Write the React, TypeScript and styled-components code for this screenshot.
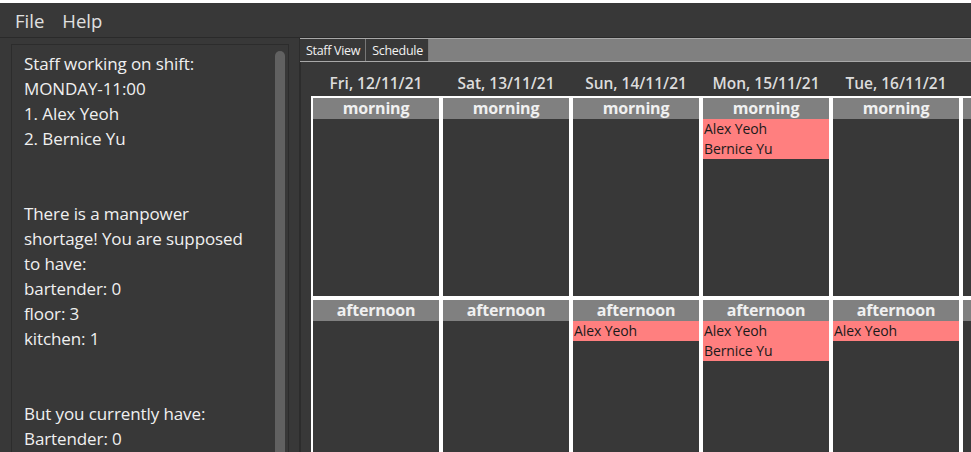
import React from "react";
import styled, { createGlobalStyle } from "styled-components";

const Global = createGlobalStyle`
  html, body { margin: 0; padding: 0; background: #383838; overflow: hidden; }
  body { font-family: "Open Sans", "Noto Sans", sans-serif; }
  * { box-sizing: border-box; }
`;

const Window = styled.div`
  width: 971px;
  height: 452px;
  display: flex;
  flex-direction: column;
  border-top: 3px solid #ffffff;
  background: #383838;
  overflow: hidden;
`;

const MenuBar = styled.div`
  height: 35px;
  flex: none;
  display: flex;
  align-items: center;
  gap: 18px;
  padding-left: 15px;
  background: #383838;
  border-bottom: 1px solid #2a2a2a;
`;

const MenuItem = styled.span`
  font-size: 18.5px;
  color: #e0e0e0;
`;

const Body = styled.div`
  flex: 1;
  display: flex;
  min-height: 0;
`;

const LeftPane = styled.div`
  width: 300px;
  flex: none;
  padding: 6px 0 0 11px;
  display: flex;
  border-right: 1px solid #2c2c2c;
`;

const InfoBox = styled.div`
  width: 278px;
  position: relative;
  border: 1px solid #2c2c2c;
  border-bottom: none;
  padding: 6px 0 0 12px;
  overflow: hidden;
`;

const InfoText = styled.div`
  font-size: 17px;
  line-height: 25px;
  color: #f0f0f0;
  width: 228px;
  white-space: pre-wrap;
  letter-spacing: -0.1px;
`;

const ScrollThumb = styled.div`
  position: absolute;
  top: 6px;
  right: 3px;
  width: 10px;
  height: 420px;
  border-radius: 5px;
  background: #616161;
`;

const RightPane = styled.div`
  flex: 1;
  display: flex;
  flex-direction: column;
  min-width: 0;
`;

const TabStrip = styled.div`
  height: 24px;
  flex: none;
  display: flex;
  background: #808080;
  border-top: 1px solid #a8a8a8;
  border-bottom: 1px solid #a8a8a8;
`;

const Tab = styled.div`
  height: 100%;
  display: flex;
  align-items: center;
  padding: 0 5px 0 6px;
  background: #383838;
  color: #f2f2f2;
  font-size: 12.5px;
  border-right: 1px solid #777;
  letter-spacing: -0.3px;
`;

const Content = styled.div`
  flex: 1;
  border-left: 1px solid #2c2c2c;
  padding: 0 0 0 10px;
  display: flex;
  flex-direction: column;
  min-height: 0;
  overflow: hidden;
`;

const DateRow = styled.div`
  height: 34px;
  flex: none;
  display: grid;
  grid-template-columns: repeat(6, 126px);
  column-gap: 4px;
  padding-left: 2px;
  align-items: end;
  padding-bottom: 2px;
`;

const DateLabel = styled.div`
  text-align: center;
  font-size: 15.5px;
  font-weight: 600;
  color: #dcdcdc;
  white-space: nowrap;
`;

const Grid = styled.div`
  display: grid;
  grid-template-columns: repeat(6, 126px);
  grid-template-rows: 198px 200px;
  gap: 4px;
  padding: 2px;
  background: #ffffff;
  width: max-content;
`;

const Cell = styled.div`
  background: #383838;
  display: flex;
  flex-direction: column;
`;

const SlotHeader = styled.div`
  height: 21px;
  background: #808080;
  color: #f0f0f0;
  font-weight: 700;
  font-size: 16px;
  line-height: 21px;
  text-align: center;
  letter-spacing: -0.2px;
`;

const Name = styled.div`
  height: 20px;
  line-height: 20px;
  background: #ff7f7f;
  color: #1a1a1a;
  font-size: 14px;
  padding-left: 1px;
  letter-spacing: -0.1px;
`;

const dates = [
  "Fri, 12/11/21",
  "Sat, 13/11/21",
  "Sun, 14/11/21",
  "Mon, 15/11/21",
  "Tue, 16/11/21",
  "Wed, 17/11/21",
];

const morning: string[][] = [[], [], [], ["Alex Yeoh", "Bernice Yu"], [], []];
const afternoon: string[][] = [
  [],
  [],
  ["Alex Yeoh"],
  ["Alex Yeoh", "Bernice Yu"],
  ["Alex Yeoh"],
  [],
];

const info = `Staff working on shift:
MONDAY-11:00
1. Alex Yeoh
2. Bernice Yu


There is a manpower shortage! You are supposed to have:
bartender: 0
floor: 3
kitchen: 1


But you currently have:
Bartender: 0
Floor: 2
Kitchen: 0`;

const Slot = ({ label, names }: { label: string; names: string[] }) => (
  <Cell>
    <SlotHeader>{label}</SlotHeader>
    {names.map((n) => (
      <Name key={n}>{n}</Name>
    ))}
  </Cell>
);

export default function App() {
  return (
    <>
      <Global />
      <Window>
        <MenuBar>
          <MenuItem>File</MenuItem>
          <MenuItem>Help</MenuItem>
        </MenuBar>
        <Body>
          <LeftPane>
            <InfoBox>
              <InfoText>{info}</InfoText>
              <ScrollThumb />
            </InfoBox>
          </LeftPane>
          <RightPane>
            <TabStrip>
              <Tab>Staff View</Tab>
              <Tab>Schedule</Tab>
            </TabStrip>
            <Content>
              <DateRow>
                {dates.map((d) => (
                  <DateLabel key={d}>{d}</DateLabel>
                ))}
              </DateRow>
              <Grid>
                {morning.map((n, i) => (
                  <Slot key={"m" + i} label="morning" names={n} />
                ))}
                {afternoon.map((n, i) => (
                  <Slot key={"a" + i} label="afternoon" names={n} />
                ))}
              </Grid>
            </Content>
          </RightPane>
        </Body>
      </Window>
    </>
  );
}
